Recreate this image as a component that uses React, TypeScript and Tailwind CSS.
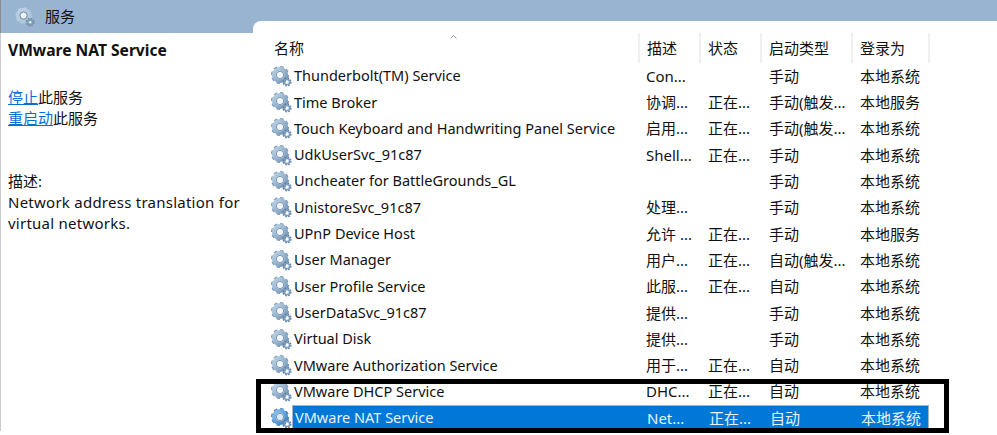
const font = '"Noto Sans", "Noto Sans CJK SC", sans-serif';

function Gear({ active = false, size = 21, faded = false }: { active?: boolean; size?: number; faded?: boolean }) {
  const main = active ? "#3a82c6" : faded ? "#a9c4d6" : "#7396b8";
  const light = active ? "#8fc0ea" : "#bcd2e4";
  const id = active ? "a" : faded ? "f" : "n";
  return (
    <svg width={size} height={size} viewBox="0 0 21 21" className="shrink-0">
      <defs>
        <linearGradient id={`g${id}`} x1="0" y1="0" x2="1" y2="1">
          <stop offset="0" stopColor={light} />
          <stop offset="1" stopColor={main} />
        </linearGradient>
      </defs>
      <circle cx="9" cy="9" r="7.4" fill="none" stroke={main} strokeWidth="3.2" strokeDasharray="3.1 2.7" />
      <circle cx="9" cy="9" r="6.2" fill="none" stroke={`url(#g${id})`} strokeWidth="3.8" />
      <circle cx="9" cy="9" r="3.7" fill={active ? "#dcecf8" : "#f1f6fa"} stroke="#56779a" strokeWidth="0.8" />
      <circle cx="16" cy="16" r="3.5" fill="none" stroke="#5f80a1" strokeWidth="2.1" strokeDasharray="1.5 1.25" />
      <circle cx="16" cy="16" r="2.6" fill="none" stroke="#7f9dba" strokeWidth="1.5" />
      <circle cx="16" cy="16" r="1.1" fill="#fff" />
    </svg>
  );
}

const rows = [
  ["Thunderbolt(TM) Service", "Con...", "", "手动", "本地系统"],
  ["Time Broker", "协调...", "正在...", "手动(触发...", "本地服务"],
  ["Touch Keyboard and Handwriting Panel Service", "启用...", "正在...", "手动(触发...", "本地系统"],
  ["UdkUserSvc_91c87", "Shell...", "正在...", "手动", "本地系统"],
  ["Uncheater for BattleGrounds_GL", "", "", "手动", "本地系统"],
  ["UnistoreSvc_91c87", "处理...", "", "手动", "本地系统"],
  ["UPnP Device Host", "允许 ...", "正在...", "手动", "本地服务"],
  ["User Manager", "用户...", "正在...", "自动(触发...", "本地系统"],
  ["User Profile Service", "此服...", "正在...", "自动", "本地系统"],
  ["UserDataSvc_91c87", "提供...", "", "手动", "本地系统"],
  ["Virtual Disk", "提供...", "", "手动", "本地系统"],
  ["VMware Authorization Service", "用于...", "正在...", "自动", "本地系统"],
  ["VMware DHCP Service", "DHC...", "正在...", "自动", "本地系统"],
  ["VMware NAT Service", "Net...", "正在...", "自动", "本地系统"],
];

const headers = ["描述", "状态", "启动类型", "登录为"];
const headerWidths = ["w-[61px]", "w-[61px]", "w-[91px]", "w-[77px]"];

export default function App() {
  return (
    <div className="relative h-[435px] w-[997px] overflow-hidden bg-white text-[15px] text-[#111]" style={{ fontFamily: font }}>
      <div className="flex h-[33px] items-center gap-[10px] border-l border-[#8a8f96] bg-[#99b4d1] pl-[14px]">
        <Gear size={20} faded />
        <span className="text-[15px] leading-none">服务</span>
      </div>

      <div className="flex border-l border-[#c8ccd0]">
        <aside className="w-[252px] shrink-0 pl-[7px] pt-[7px]">
          <h2 className="text-[15.6px] leading-5 font-bold whitespace-nowrap">VMware NAT Service</h2>
          <p className="mt-[27px] text-[15px] leading-[21px]">
            <a className="text-[#0a6ed1] underline">停止</a>此服务
          </p>
          <p className="text-[15px] leading-[21px]">
            <a className="text-[#0a6ed1] underline">重启动</a>此服务
          </p>
          <p className="mt-[42px] text-[15px] leading-[21px]">描述:</p>
          <p className="text-[15px] leading-[21px] tracking-[0.25px]">
            Network address translation for
            <br />
            virtual networks.
          </p>
        </aside>

        <main className="relative z-10 -mt-[12px] flex-1 rounded-tl-[8px] bg-white pt-[12px]">
          <div className="flex h-[30px] items-center text-[15px]">
            <div className="relative flex h-full w-[387px] items-center border-r-2 border-[#f0f0f0] pl-[21px]">
              名称
              <svg width="7" height="4" viewBox="0 0 7 4" className="absolute left-[197px] top-[2px]">
                <path d="M0.5 3.5 L3.5 0.5 L6.5 3.5" fill="none" stroke="#9a9a9a" strokeWidth="1" />
              </svg>
            </div>
            {headers.map((h, i) => (
              <div key={h} className={`flex h-full ${headerWidths[i]} items-center border-r-2 border-[#f0f0f0] pl-[7px]`}>
                {h}
              </div>
            ))}
          </div>
          <div>
            {rows.map((r, i) => {
              const active = i === rows.length - 1;
              return (
                <div key={r[0]} className="flex h-[26.3px] items-center">
                  <div className="flex w-[39px] shrink-0 justify-end">
                    <Gear active={active} />
                  </div>
                  <div className={`flex h-full w-[637px] items-center whitespace-nowrap ${active ? "border border-[#9fb4c8] bg-[#0078d7] text-[#e8f2fb]" : ""}`}>
                    <span className="w-[347px] shrink-0 pl-[2px] text-[14.5px]">{r[0]}</span>
                    <span className="w-[62px] shrink-0 pl-[7px] text-[15px]">{r[1]}</span>
                    <span className="w-[60px] shrink-0 pl-[7px] text-[15px]">{r[2]}</span>
                    <span className="w-[92px] shrink-0 pl-[8px] text-[15px]">{r[3]}</span>
                    <span className="shrink-0 pl-[7px] text-[15px]">{r[4]}</span>
                  </div>
                </div>
              );
            })}
          </div>
        </main>
      </div>

      <div className="absolute left-[256px] top-[379px] z-20 h-[54px] w-[693px] border-[5px] border-black" />
    </div>
  );
}
